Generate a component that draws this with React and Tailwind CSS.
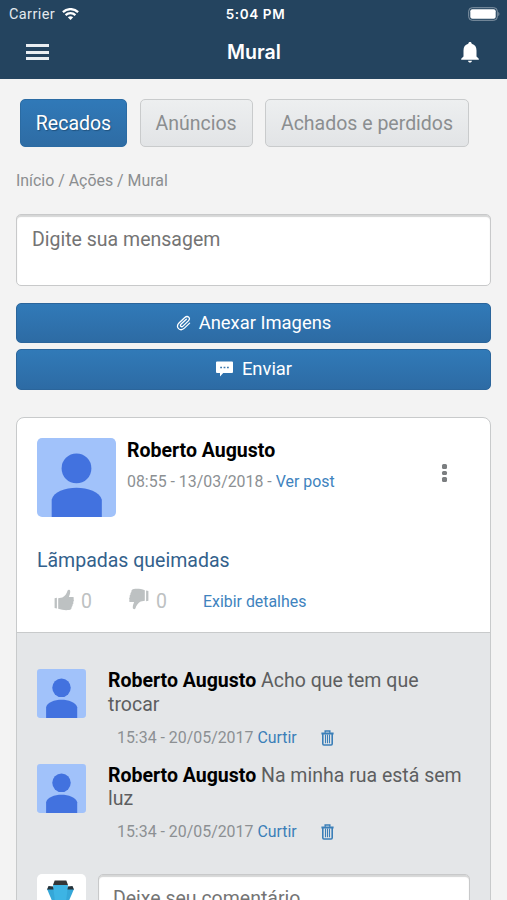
import React, { useState } from 'react';

const comments = [
  { id: 1, author: 'Roberto Augusto', text: 'Acho que tem que trocar', date: '15:34 - 20/05/2017' },
  { id: 2, author: 'Roberto Augusto', text: 'Na minha rua está sem luz', date: '15:34 - 20/05/2017' }
];

const tabs = [
  { name: 'Recados', width: 'w-[107px]' },
  { name: 'Anúncios', width: 'w-[113px]' },
  { name: 'Achados e perdidos', width: 'w-[204px]' }
];

const Avatar = ({ className }) => (
  <svg className={className} viewBox="0 0 78 78">
    <rect width="78" height="78" rx="5" fill="#a1c2fa" />
    <circle cx="39" cy="30" r="14.7" fill="#4272df" />
    <path d="M14.5 78V61C16 53 28 49 39 49s23 4 25 12v17z" fill="#4272df" />
  </svg>
);

const Thumb = ({ className }) => (
  <svg className={className} viewBox="0 0 20 22" fill="#bdc1c2">
    <path d="M.6 9.2 2.9 8.8v10.7L.6 19z" />
    <path d="M4.2 9.2 8.3 8.6C11 7 12.8 4.8 13.5 1.8 14 .3 16 .4 16.2 2.2c.2 2.1-.7 4-1.3 5.7h3.7c1.3 0 1.6 1.5.8 2.2.8.9.6 2.2-.3 2.8.6 1 .3 2.2-.6 2.7.3 1.2-.2 2-.9 2.4.2 1.8-.8 2.8-2.5 3-3.5.4-7.3.1-10.9-1.2z" />
  </svg>
);

const Trash = () => (
  <svg className="h-[16px] w-[13px]" viewBox="0 0 13 16" fill="none" stroke="#3b7fb8">
    <path d="M4.2 2.8V.9h4.6v1.9" strokeWidth="1.5" />
    <path d="M.4 3.5h12.2" strokeWidth="2" />
    <path d="M1.8 4v9.8c0 .8.4 1.2 1.1 1.2h7.2c.7 0 1.1-.4 1.1-1.2V4" strokeWidth="1.6" />
    <path d="M4.5 4.5v8.8M6.5 4.5v8.8M8.5 4.5v8.8" strokeWidth="1.1" />
  </svg>
);

const Header = () => (
  <header className="h-[79px] bg-[#24445f] text-white">
    <div className="grid h-[27px] grid-cols-3 items-center pl-[9px] pr-[7px] text-[14px]">
      <div className="flex items-center gap-[7px]">
        <span className="pt-[2px] text-[14.5px] tracking-[0.4px] text-[#e3e9ee]">Carrier</span>
        <svg className="h-[12px] w-[17px]" viewBox="0 0 17 12" fill="none" stroke="white" strokeWidth="2.3">
          <path d="M.9 4.1c4.3-4 10.9-4 15.2 0M3.6 7.1c2.8-2.6 7-2.6 9.8 0" />
          <path d="M5.8 9.2c1.6-1.4 3.8-1.4 5.4 0L8.5 12z" fill="white" stroke="none" />
        </svg>
      </div>
      <span className="pl-[2px] text-center font-['Inter'] text-[13.5px] font-semibold tracking-[0.6px] whitespace-nowrap">5:04 PM</span>
      <svg className="h-[14px] w-[32px] justify-self-end" viewBox="0 0 32 14">
        <rect x=".7" y=".7" width="28.6" height="12.6" rx="3.5" fill="none" stroke="#8496a5" />
        <rect x="2.3" y="2.2" width="25.4" height="9.6" rx="2" fill="white" />
        <path d="M30.3 5v4c1.4-.4 1.4-3.6 0-4z" fill="#8496a5" />
      </svg>
    </div>
    <div className="flex h-[50px] items-center justify-between pl-[26px] pr-[28px]">
      <button className="flex w-[23px] flex-col gap-[3.5px]">
        <span className="h-[3px] bg-[#e9eef2]"></span>
        <span className="h-[3px] bg-[#e9eef2]"></span>
        <span className="h-[3px] bg-[#e9eef2]"></span>
      </button>
      <h1 className="pr-[2px] font-['Inter'] text-[19.5px] font-semibold">Mural</h1>
      <svg className="h-[21px] w-[18px]" viewBox="0 0 18 21" fill="white">
        <path d="M9 0c1 0 1.6.7 1.7 1.7 3.2.8 4.8 3.2 4.8 6.7v6l2.3 2.3v1H.2v-1l2.3-2.3v-6c0-3.5 1.6-5.9 4.8-6.7C7.4.7 8 0 9 0zM7 18.7h4c-.2 1.2-.9 1.8-2 1.8s-1.8-.6-2-1.8z" />
      </svg>
    </div>
  </header>
);

const App = () => {
  const [activeTab, setActiveTab] = useState('Recados');

  return (
    <div className="h-[900px] w-full overflow-hidden bg-[#f3f3f3] font-['Roboto',sans-serif] text-[19.5px] leading-[24px] text-[#5d5e60]">
      <Header />

      <main className="px-4">
        <nav className="flex gap-[12.5px] pl-1 pt-5">
          {tabs.map((tab) => (
            <button
              key={tab.name}
              onClick={() => setActiveTab(tab.name)}
              className={`${tab.width} h-[48px] shrink-0 rounded-[5px] border pt-[1px] whitespace-nowrap ${
                activeTab === tab.name
                  ? 'border-[#2b6ba3] bg-linear-to-b from-[#3079b8] to-[#2e6ca4] text-white text-shadow-[1px_1px_1px_#20527e]'
                  : 'border-[#c9cbcc] bg-linear-to-b from-[#edeff0] to-[#e2e4e6] text-[#8b8e90]'
              }`}
            >
              {tab.name}
            </button>
          ))}
        </nav>

        <div className="mt-[22px] text-[15.9px] text-[#8b8e90]">Início / Ações / Mural</div>

        <textarea
          placeholder="Digite sua mensagem"
          className="mt-[21px] block h-[72px] w-[475px] resize-none rounded-[5px] border border-[#c8c9ca] bg-white px-[15px] py-[13px] shadow-[inset_0_2px_1px_#d5d6d6] placeholder:text-[#747474]"
        />

        <div className="mt-[17px] flex flex-col gap-[6px] text-[18.4px] text-white text-shadow-[1px_1px_1px_#20527e]">
          <button className="flex h-[40px] items-center justify-center gap-[7px] rounded-[5px] border border-[#2b659b] bg-linear-to-b from-[#317ab8] to-[#2d6ba4] pb-[1px]">
            <svg className="h-4 w-4" viewBox="0 0 16 16" fill="none" stroke="white" strokeWidth="1.3" strokeLinecap="round">
              <path d="M10.3 4.2 5.2 9c-1.8 1.8.2 3.6 1.8 2.1l5.4-5.2c2.9-2.9-.8-5.9-3.6-3.3L3 8c-4.3 4.3 1.3 9 5.4 5.1l5.2-5" />
            </svg>
            Anexar Imagens
          </button>
          <button className="flex h-[41px] items-center justify-center gap-[9px] rounded-[5px] border border-[#2b659b] bg-linear-to-b from-[#317ab8] to-[#2d6ba4] pl-[1px] pb-[2px]">
            <svg className="h-[16px] w-[17px]" viewBox="0 0 17 16">
              <path d="M1 .5h15q1 0 1 1V11q0 1-1 1H7.2L4 15.5V12H1q-1 0-1-1V1.5q0-1 1-1z" fill="white" />
              <path d="M4.2 6.5h1.8M7.6 6.5h1.8M11 6.5h1.8" stroke="#3c79ae" strokeWidth="1.5" />
            </svg>
            Enviar
          </button>
        </div>

        <article className="mt-[27px] h-[600px] w-[475px] overflow-hidden rounded-t-[8px] border border-[#c8cacb] bg-white">
          <section className="flex h-[215px] flex-col border-b border-[#c8cacb] px-5 pt-5">
            <div className="flex">
              <Avatar className="h-[79px] w-[79px] shrink-0" />
              <div className="ml-[11px] flex-1 pt-[1px]">
                <div className="font-bold text-black">Roberto Augusto</div>
                <div className="mt-[7px] text-[15.9px] text-[#8c9093]">
                  08:55 - 13/03/2018 - <a className="text-[#4083be]">Ver post</a>
                </div>
              </div>
              <button className="mr-[23px] mt-[26px] flex h-[18px] w-[5px] flex-col gap-[1.7px]">
                <span className="h-[5px] w-[5px] rounded-[1.5px] bg-[#7b7e80]"></span>
                <span className="h-[5px] w-[5px] rounded-[1.5px] bg-[#7b7e80]"></span>
                <span className="h-[5px] w-[5px] rounded-[1.5px] bg-[#7b7e80]"></span>
              </button>
            </div>
            <p className="mt-[32px] text-[#33618c]">Lãmpadas queimadas</p>
            <div className="mt-[15px] flex items-center pl-[17px] text-[#bdc1c2]">
              <Thumb className="mb-[4px] h-[22px] w-[20px]" />
              <span className="ml-[7px] w-[11px]">0</span>
              <Thumb className="mb-[5px] ml-[37px] h-[22px] w-[20px] rotate-180" />
              <span className="ml-[7px] w-[11px]">0</span>
              <a className="ml-[36px] text-[15.9px] text-[#4083be]">Exibir detalhes</a>
            </div>
          </section>

          <section className="h-[385px] bg-[#e4e6e8] px-5 pt-[35px]">
            {comments.map((comment) => (
              <div key={comment.id} className="flex h-[94.5px] items-start">
                <Avatar className="mt-px h-[49px] w-[49px] shrink-0" />
                <div className="ml-[22px] pt-[1px]">
                  <p className="w-[365px] leading-[23.5px]">
                    <span className="font-bold text-black">{comment.author}</span> {comment.text}
                  </p>
                  <div className="ml-[9px] mt-[9.5px] flex items-center text-[15.9px] text-[#8c9093]">
                    <span>{comment.date}</span>
                    <a className="ml-1 text-[#3b7fb8]">Curtir</a>
                    <button className="ml-6"><Trash /></button>
                  </div>
                </div>
              </div>
            ))}
            <div className="mt-[17px] flex">
              <div className="flex h-[49px] w-[49px] justify-center rounded-[5px] bg-white pt-[6px]">
                <svg className="h-[34px] w-[30px]" viewBox="0 0 30 34">
                  <path d="m1 9 6-1 2 2 1 16-3-3z" fill="#35a7d8" />
                  <path d="m28 9-6-1-2 2-1 16 3-3z" fill="#35a7d8" />
                  <path d="m1 9.5 1.5-3.5 5 .5.5 3zM28 9.5l-1.5-3.5-5 .5-.5 3z" fill="#25333b" />
                  <path d="M7 5h15l-2.5 21h-10z" fill="#3db4e4" />
                  <path d="m7 5 1.7-4.5h11.6l1.7 4.5z" fill="#343638" />
                </svg>
              </div>
              <input
                placeholder="Deixe seu comentário"
                className="ml-[12px] h-[49px] w-[373px] rounded-[5px] border border-[#c8c9ca] bg-white px-[14px] pb-[1px] shadow-[inset_0_2px_1px_#d5d6d6] placeholder:text-[#747474]"
              />
            </div>
          </section>
        </article>
      </main>
    </div>
  );
};

export default App;
